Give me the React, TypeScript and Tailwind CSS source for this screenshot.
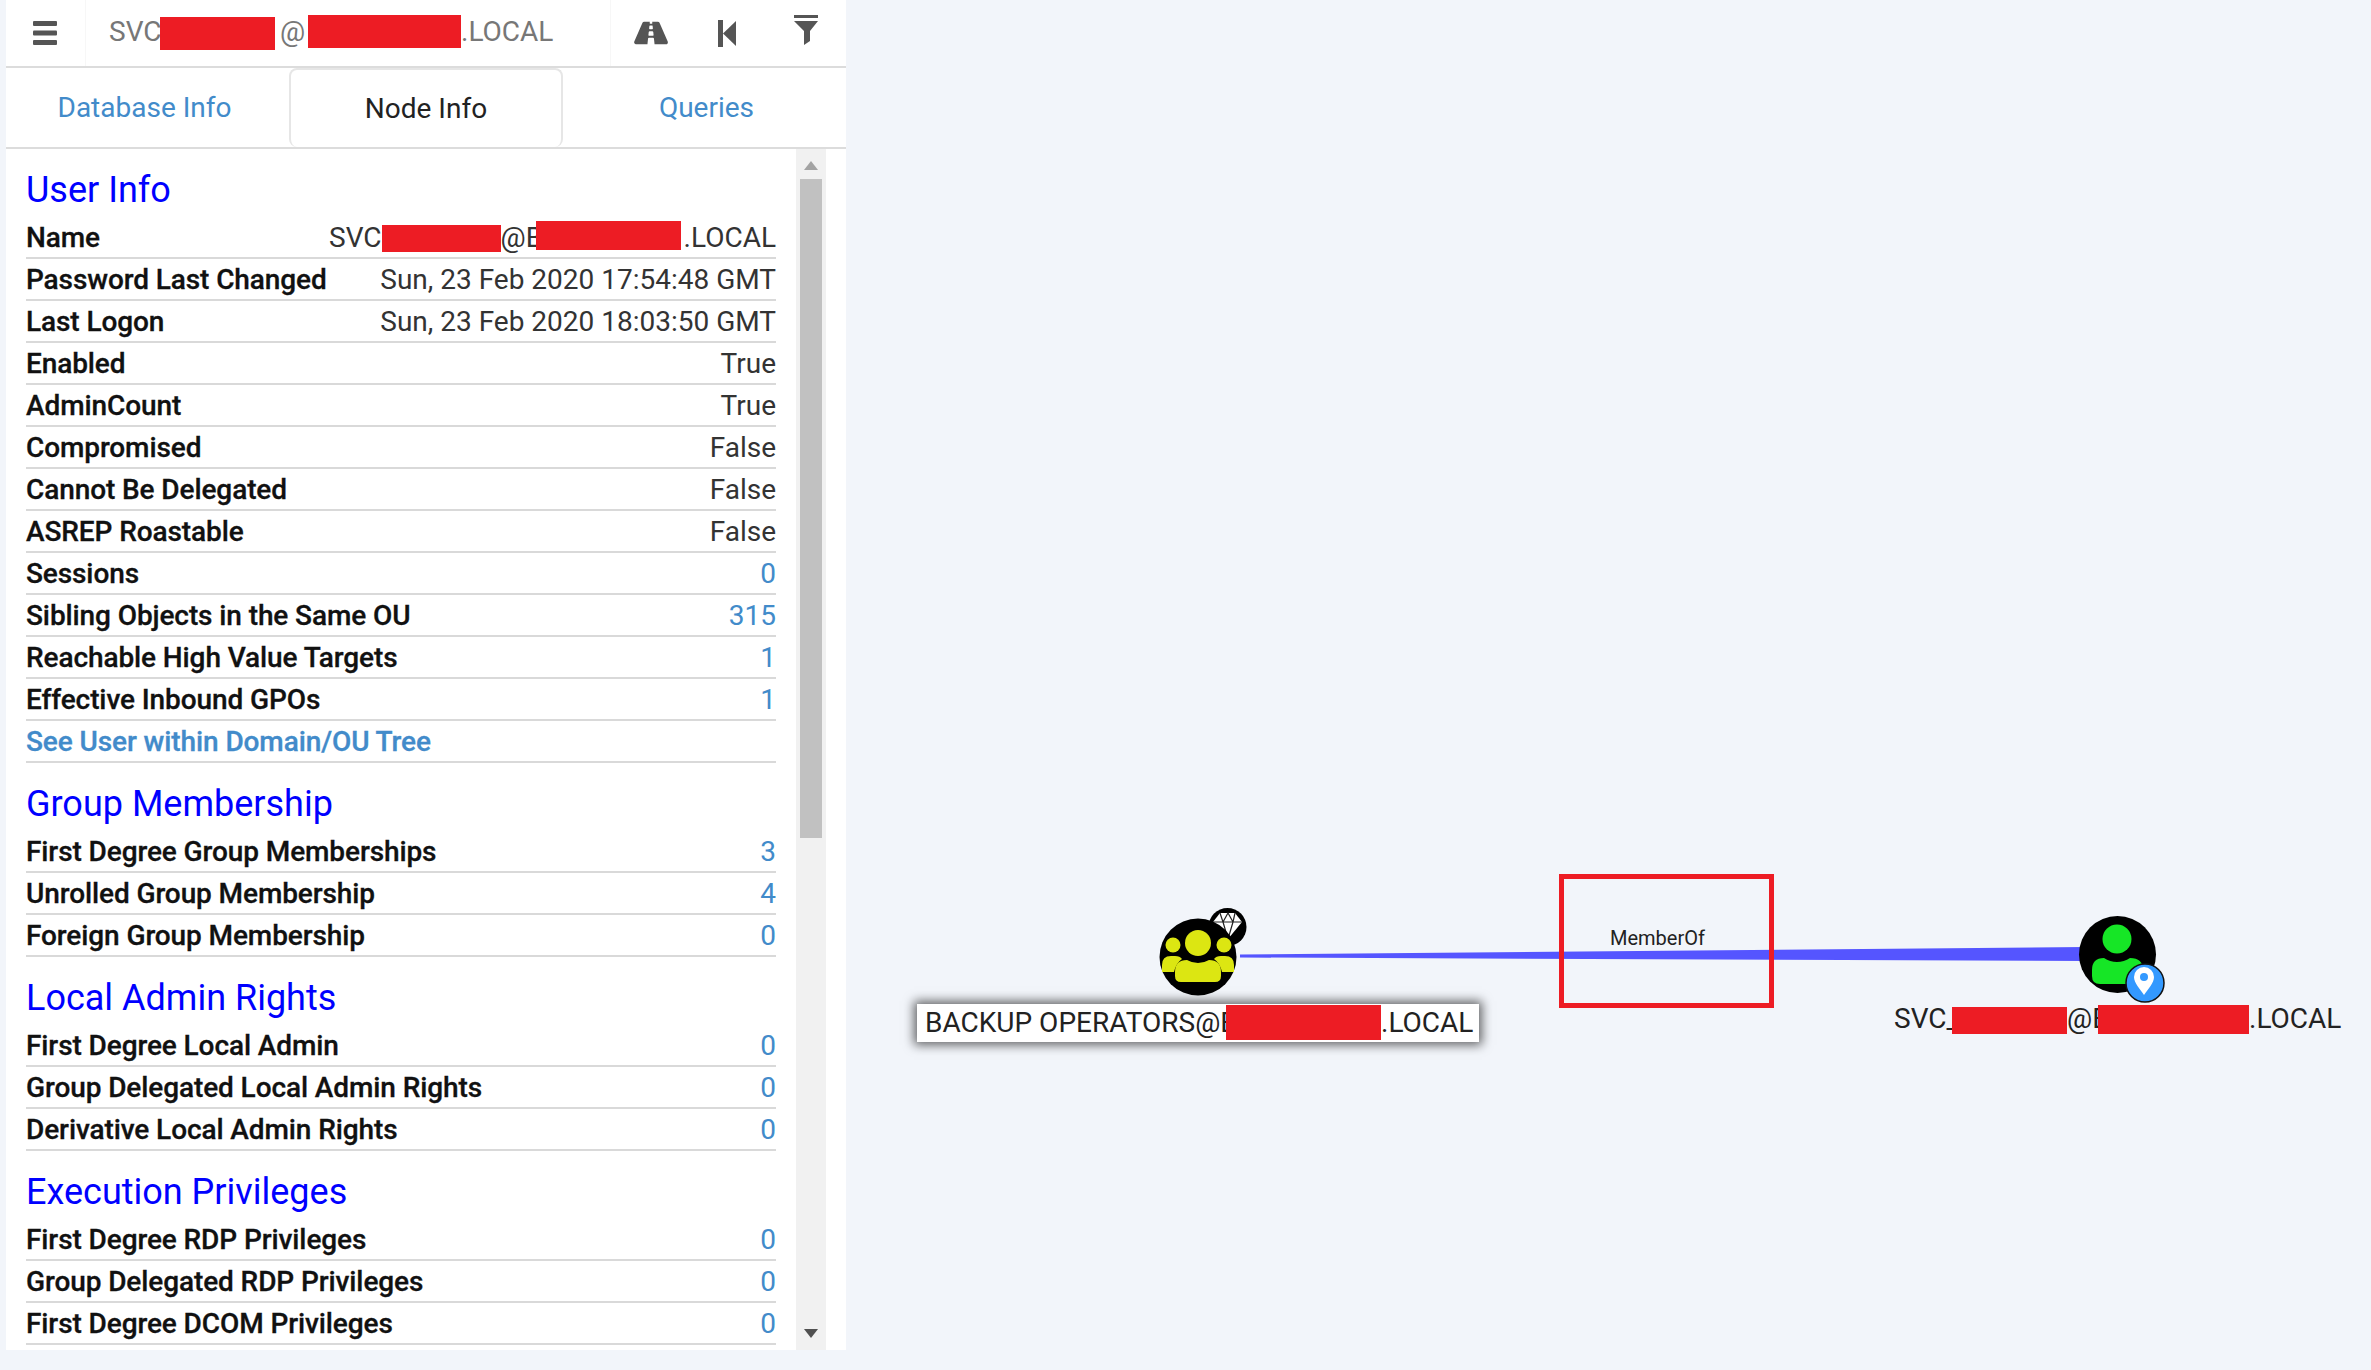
import React from "react";
import { FaRoad } from "react-icons/fa";

type Row = { label: string; value: string; kind?: "link" | "plain" };

const userInfo: Row[] = [
  { label: "Password Last Changed", value: "Sun, 23 Feb 2020 17:54:48 GMT" },
  { label: "Last Logon", value: "Sun, 23 Feb 2020 18:03:50 GMT" },
  { label: "Enabled", value: "True" },
  { label: "AdminCount", value: "True" },
  { label: "Compromised", value: "False" },
  { label: "Cannot Be Delegated", value: "False" },
  { label: "ASREP Roastable", value: "False" },
  { label: "Sessions", value: "0", kind: "link" },
  { label: "Sibling Objects in the Same OU", value: "315", kind: "link" },
  { label: "Reachable High Value Targets", value: "1", kind: "link" },
  { label: "Effective Inbound GPOs", value: "1", kind: "link" },
];

const sections: { title: string; rows: Row[] }[] = [
  {
    title: "Group Membership",
    rows: [
      { label: "First Degree Group Memberships", value: "3", kind: "link" },
      { label: "Unrolled Group Membership", value: "4", kind: "link" },
      { label: "Foreign Group Membership", value: "0", kind: "link" },
    ],
  },
  {
    title: "Local Admin Rights",
    rows: [
      { label: "First Degree Local Admin", value: "0", kind: "link" },
      { label: "Group Delegated Local Admin Rights", value: "0", kind: "link" },
      { label: "Derivative Local Admin Rights", value: "0", kind: "link" },
    ],
  },
  {
    title: "Execution Privileges",
    rows: [
      { label: "First Degree RDP Privileges", value: "0", kind: "link" },
      { label: "Group Delegated RDP Privileges", value: "0", kind: "link" },
      { label: "First Degree DCOM Privileges", value: "0", kind: "link" },
    ],
  },
];

function Heading({ children }: { children: React.ReactNode }) {
  return <h4 className="h-[68px] pt-[19px] text-[36px] leading-[44px] font-normal text-[#0000ff]">{children}</h4>;
}

function RowLine({ label, children }: { label: React.ReactNode; children?: React.ReactNode }) {
  return (
    <div className="flex h-[42px] items-center justify-between border-b-2 border-[#d9d9d9] pt-[1px] text-[28px] leading-[39px] whitespace-nowrap">
      <span className="font-medium tracking-[-0.1px] text-[#111] [-webkit-text-stroke:0.3px_#111]">{label}</span>
      {children}
    </div>
  );
}

function DataRow({ row }: { row: Row }) {
  return (
    <RowLine label={row.label}>
      <span className={row.kind === "link" ? "text-[#428bca]" : "text-[#333]"}>{row.value}</span>
    </RowLine>
  );
}

export default function App() {
  return (
    <div className="flex h-[1370px] w-[2371px] overflow-hidden bg-[#f2f5fa] font-['Roboto',sans-serif]">
      {/* Side panel */}
      <div className="ml-[6px] flex h-[1350px] w-[840px] flex-col bg-white">
        {/* Search bar */}
        <div className="flex h-[68px] shrink-0 items-stretch border-b-2 border-[#dcdcdc]">
          <div className="flex w-[79px] items-center justify-center pr-[2px] text-[#555]">
            <svg className="h-[24px] w-[24px]" viewBox="0 0 24 24" fill="currentColor">
              <rect x="0" y="0" width="24" height="5" rx="1" />
              <rect x="0" y="9.500" width="24" height="5" rx="1" />
              <rect x="0" y="19" width="24" height="5" rx="1" />
            </svg>
          </div>
          <div className="flex w-[526px] items-start border-x border-[#f7f7f7] pl-[23px] text-[28px] text-[#777]">
            <span className="mt-[14px] w-[51px] shrink-0 leading-[36px]">SVC</span>
            <span className="mt-[17px] h-[33px] w-[115px] shrink-0 bg-[#ed1c24]" />
            <span className="mt-[14px] ml-[5px] w-[28px] shrink-0 leading-[36px]">@</span>
            <span className="mt-[15px] h-[33px] w-[153px] shrink-0 bg-[#ed1c24]" />
            <span className="mt-[14px] leading-[36px]">.LOCAL</span>
          </div>
          <div className="flex flex-1 items-center text-[#555]">
            <FaRoad className="ml-[23px] h-[30px] w-[34px]" />
            <svg className="ml-[50px] h-[27px] w-[18px]" viewBox="0 0 18 27" fill="currentColor">
              <rect x="0" y="0" width="5" height="27" />
              <path d="M18 1v25L5 13.500z" />
            </svg>
            <svg className="ml-[57px] mb-[6px] h-[30px] w-[26px]" viewBox="0 0 26 30" fill="currentColor">
              <rect x="1" y="0" width="24" height="3" />
              <path d="M1 6h24l-8 10v10l-6 4V16z" />
            </svg>
          </div>
        </div>

        {/* Tabs */}
        <div className="flex h-[81px] shrink-0 border-b-2 border-[#dcdcdc] text-[28px]">
          <div className="flex w-[283px] items-center justify-center pr-[6px] text-[#428bca]">Database Info</div>
          <div className="flex w-[274px] items-center justify-center rounded-[8px] border-x-2 border-t-2 border-[#e6e6e6] bg-white text-[#222]">
            Node Info
          </div>
          <div className="flex flex-1 items-center justify-center pl-[4px] text-[#428bca]">Queries</div>
        </div>

        {/* Scrolling content */}
        <div className="flex min-h-0 flex-1 pr-[20px]">
          <div className="min-w-0 flex-1 overflow-hidden pr-[20px] pl-[20px]">
            <Heading>User Info</Heading>
            <RowLine label="Name">
              <span className="flex items-start text-[#333]">
                <span>SVC</span>
                <span className="mt-[7px] h-[27px] w-[119px] bg-[#ed1c24]" />
                <span className="w-[35px] shrink-0">@B</span>
                <span className="mt-[3px] h-[29px] w-[145px] bg-[#ed1c24]" />
                <span className="pl-[3px]">.LOCAL</span>
              </span>
            </RowLine>
            {userInfo.map((r) => (
              <DataRow key={r.label} row={r} />
            ))}
            <RowLine label={<span className="text-[#428bca] [-webkit-text-stroke:0.3px_#428bca]">See User within Domain/OU Tree</span>} />
            {sections.map((s) => (
              <div key={s.title}>
                <Heading>{s.title}</Heading>
                {s.rows.map((r) => (
                  <DataRow key={r.label} row={r} />
                ))}
              </div>
            ))}
          </div>

          {/* Scrollbar */}
          <div className="flex w-[30px] shrink-0 flex-col items-center bg-[#f1f1f1] pt-[12px]">
            <svg className="h-[9px] w-[14px]" viewBox="0 0 14 9" fill="#a3a3a3">
              <path d="M7 0l7 9H0z" />
            </svg>
            <div className="mt-[9px] h-[659px] w-[22px] bg-[#c1c1c1]" />
            <div className="flex-1" />
            <svg className="mb-[12px] h-[9px] w-[14px]" viewBox="0 0 14 9" fill="#505050">
              <path d="M0 0h14L7 9z" />
            </svg>
          </div>
        </div>
      </div>

      {/* Graph canvas */}
      <div className="relative h-full flex-1">
        <svg className="absolute inset-0 h-full w-full" viewBox="846 0 1525 1370">
          <polygon points="1240,954.500 2085,947 2085,961 1240,957.500" fill="#5555ff" />

          {/* Group node */}
          <circle cx="1227.500" cy="927" r="19" fill="#000" />
          <path d="M1213 922l7-9h15l7 9-14 17z" fill="#fff" />
          <path d="M1213 922h29M1220 913l3 9 5 17 5-17 2-9M1223 922l5-9 5 9" stroke="#222" strokeWidth="1.200" fill="none" />
          <circle cx="1198" cy="957" r="38.500" fill="#000" />
          <circle cx="1198" cy="943" r="13" fill="#dce612" />
          <circle cx="1173" cy="945" r="7.500" fill="#dce612" />
          <circle cx="1224" cy="945" r="7.500" fill="#dce612" />
          <path d="M1162 972v-7q0-9 9-9h4q5 0 7 3q-6 4-8 13z" fill="#dce612" />
          <path d="M1234 972v-7q0-9-9-9h-4q-5 0-7 3q6 4 8 13z" fill="#dce612" />
          <path d="M1175 976v-4q0-12 12-12q5 3 11 3q6 0 11-3q12 0 12 12v4q0 6-6 6h-34q-6 0-6-6z" fill="#dce612" />

          {/* User node */}
          <circle cx="2117.500" cy="954.500" r="38.500" fill="#000" />
          <circle cx="2117" cy="939" r="14.500" fill="#16e626" />
          <path d="M2092 976v-6q0-12 12-12q6 4 13 4q7 0 13-4q13 0 13 12v14h-43q-8 0-8-8z" fill="#16e626" />
          <circle cx="2145" cy="983" r="19" fill="#3399ff" stroke="#111" strokeWidth="1.500" />
          <path d="M2144 967a10 10 0 0 1 10 10c0 6-6 12-10 18c-4-6-10-12-10-18a10 10 0 0 1 10-10z" fill="#fff" />
          <circle cx="2144" cy="977" r="4" fill="#3399ff" />
        </svg>

        {/* Edge label and annotation */}
        <div className="absolute top-[874px] left-[713px] h-[134px] w-[215px] border-[5px] border-[#ed1c24]" />
        <span className="absolute top-[926px] left-[764px] text-[20px] leading-[24px] text-[#222]">MemberOf</span>

        {/* Highlighted group label */}
        <div className="absolute top-[1004px] left-[71px] flex h-[38px] w-[562px] items-start bg-white pl-[8px] text-[28px] leading-[38px] whitespace-nowrap text-[#222] shadow-[0_0_10px_3px_rgba(0,0,0,0.6)]">
          <span className="w-[301px] shrink-0">BACKUP OPERATORS@B</span>
          <span className="mt-[1px] h-[35px] w-[155px] shrink-0 bg-[#ed1c24]" />
          <span>.LOCAL</span>
        </div>

        {/* User label */}
        <div className="absolute top-[1001px] left-[1048px] flex items-start text-[28px] leading-[36px] whitespace-nowrap text-[#222]">
          <span className="w-[58px] shrink-0">SVC_</span>
          <span className="mt-[6px] h-[27px] w-[115px] shrink-0 bg-[#ed1c24]" />
          <span className="w-[31px] shrink-0">@B</span>
          <span className="mt-[4px] h-[29px] w-[151px] shrink-0 bg-[#ed1c24]" />
          <span>.LOCAL</span>
        </div>
      </div>
    </div>
  );
}
